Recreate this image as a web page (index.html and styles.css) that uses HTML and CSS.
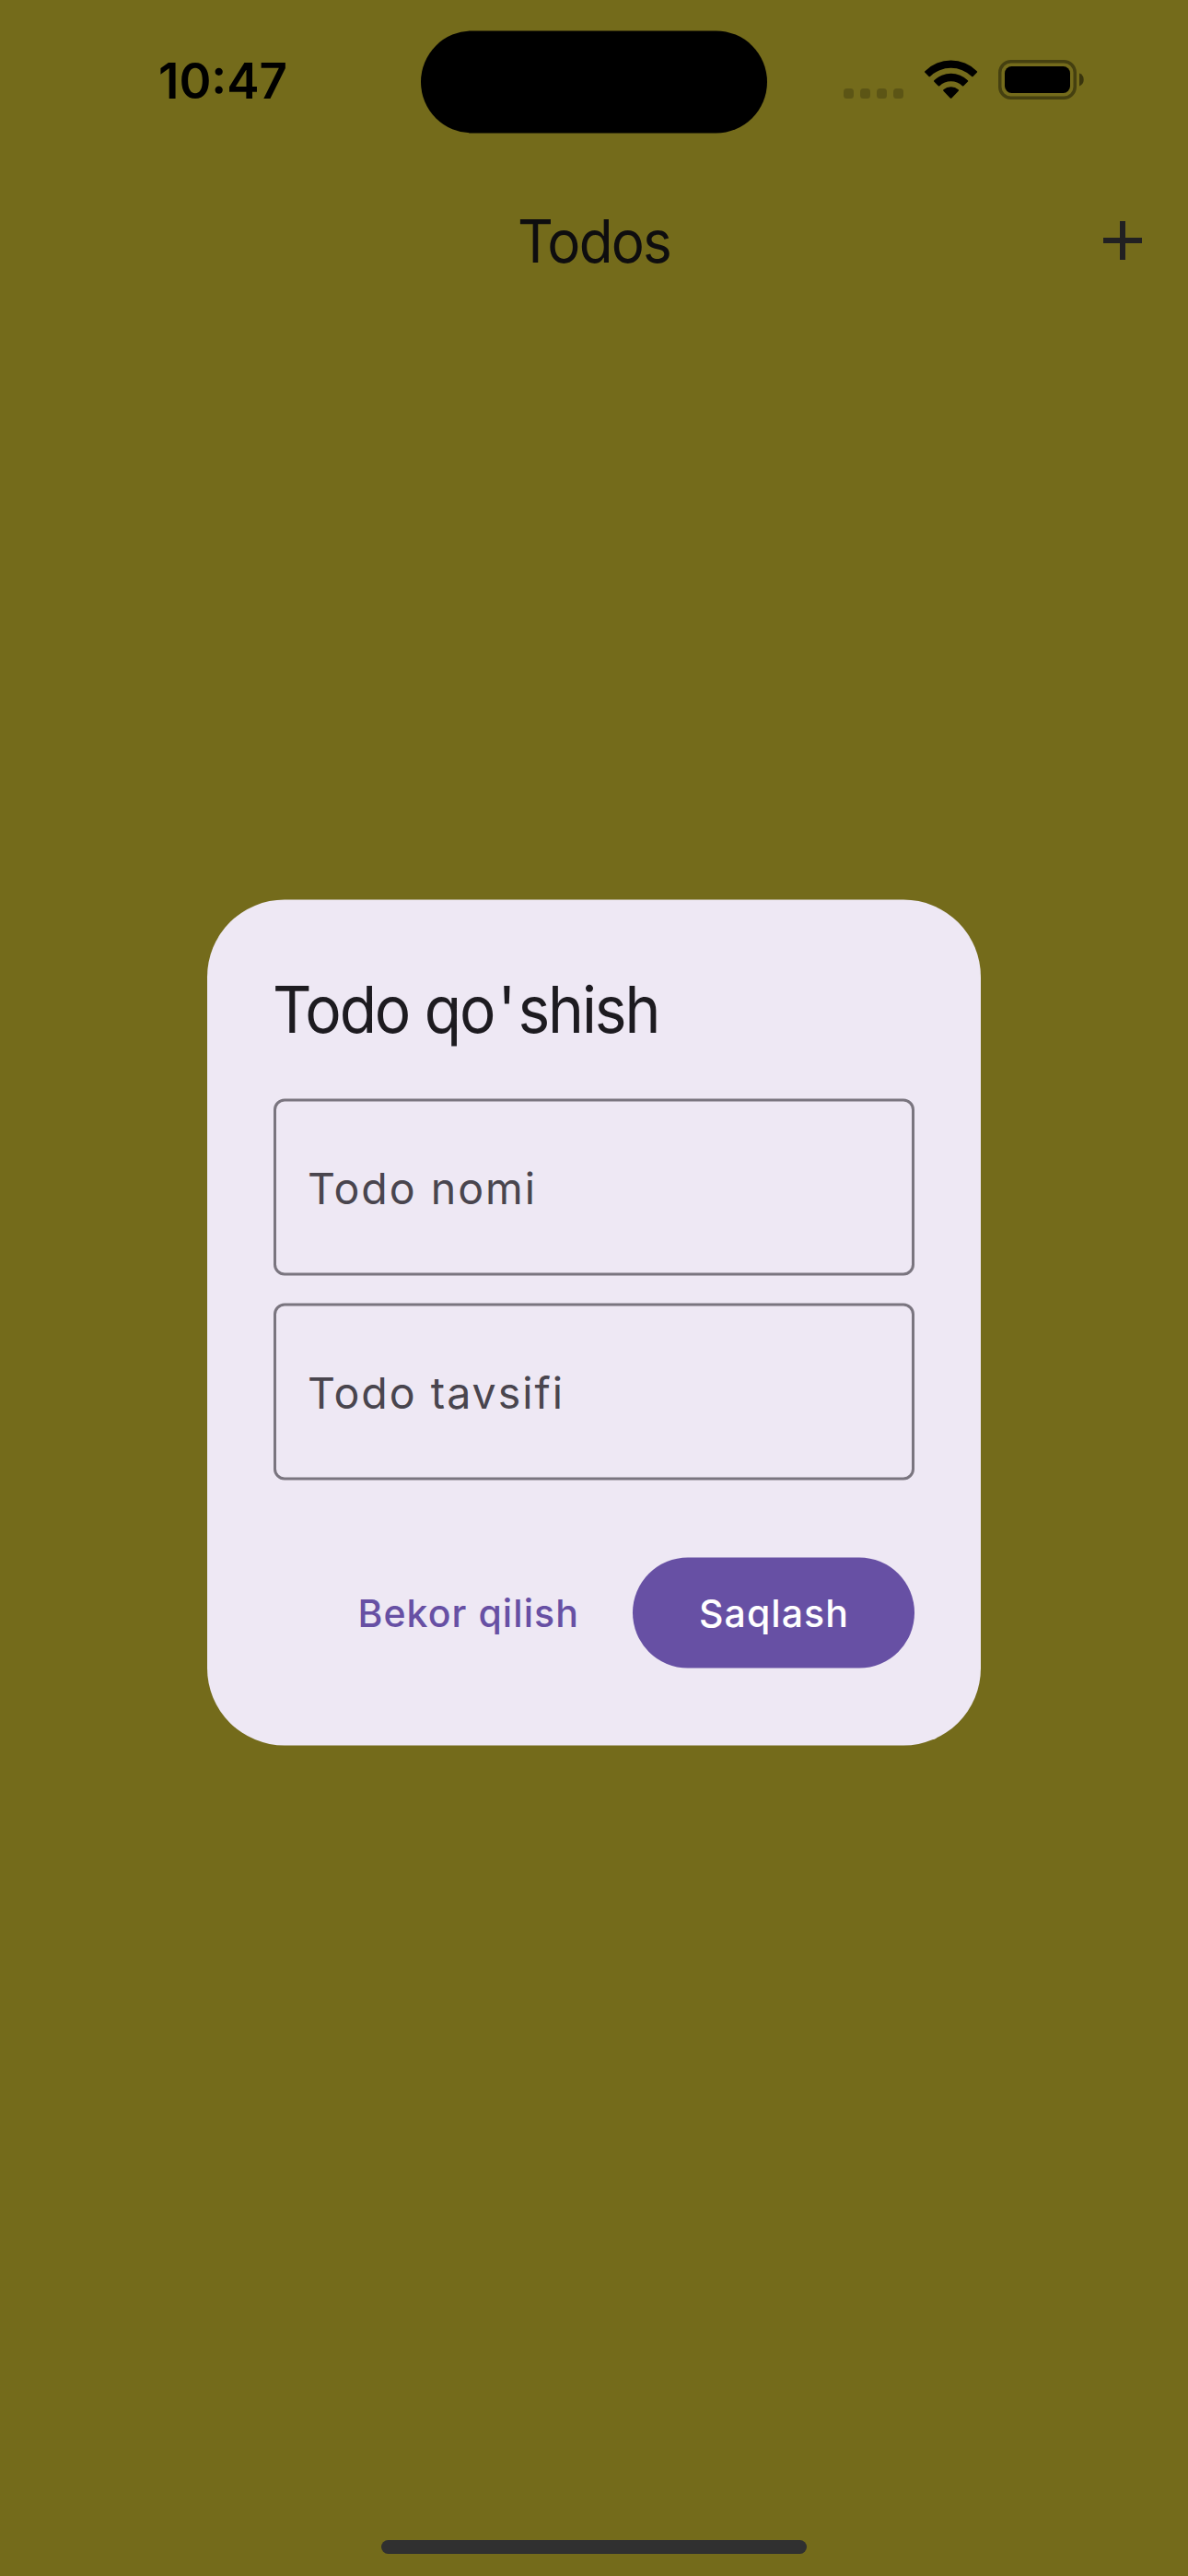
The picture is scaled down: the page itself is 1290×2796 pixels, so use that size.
FILE: index.html
```html
<!DOCTYPE html>
<html lang="uz">
<head>
<meta charset="utf-8">
<title>Todos</title>
<link rel="stylesheet" href="styles.css">
</head>
<body>
<div class="screen">
  <header class="status-bar">
    <div class="clock">10:47</div>
    <div class="island"></div>
    <div class="indicators">
      <div class="cellular"><i></i><i></i><i></i><i></i></div>
      <svg class="wifi" viewBox="0 0 58 43" aria-hidden="true">
        <path d="M0.2 13.6Q-0.3 12.9 0.4 12.2A40 40 0 0 1 56.8 12.2Q57.5 12.9 57 13.6L52.6 18Q51.9 18.6 51.2 18A32.5 32.5 0 0 0 6 18Q5.3 18.6 4.6 18Z"/>
        <path d="M10.2 23.6Q9.6 22.9 10.3 22.2A26.3 26.3 0 0 1 46.9 22.2Q47.6 22.9 47 23.6L42.3 28.3Q41.6 28.9 40.9 28.3A17.8 17.8 0 0 0 16.3 28.3Q15.6 28.9 14.9 28.3Z"/>
        <path d="M20.4 33.7Q19.7 33 20.5 32.3A12.4 12.4 0 0 1 36.7 32.3Q37.5 33 36.8 33.7L29.4 41.4Q28.6 42.2 27.8 41.4Z"/>
      </svg>
      <svg class="battery" viewBox="0 0 95 43" aria-hidden="true">
        <rect x="1.75" y="1.75" width="81.5" height="39.5" rx="12" fill="none" stroke="#000" stroke-opacity=".4" stroke-width="3.5"/>
        <rect x="7" y="7" width="71" height="29" rx="7.5"/>
        <path d="M88 14.6A7.4 7.4 0 0 1 88 28.4Z" fill-opacity=".5"/>
      </svg>
    </div>
  </header>

  <nav class="app-bar">
    <h1 class="app-title">Todos</h1>
    <svg class="add" viewBox="0 0 24 24" aria-hidden="true"><path d="M19 13h-6v6h-2v-6H5v-2h6V5h2v6h6z"/></svg>
  </nav>

  <main class="content">
    <section class="dialog">
      <h2 class="dialog-title">Todo qo<span class="apostrophe">'</span>shish</h2>
      <div class="field"><label>Todo nomi</label></div>
      <div class="field"><label>Todo tavsifi</label></div>
      <div class="actions">
        <button class="btn text">Bekor qilish</button>
        <button class="btn filled">Saqlash</button>
      </div>
    </section>
  </main>

  <footer class="home"><div class="home-bar"></div></footer>
</div>
</body>
</html>
```
FILE: styles.css
```css
* { box-sizing: border-box; }

body {
  margin: 0;
  background: #746b1b;
  font-family: Inter, "Liberation Sans", sans-serif;
}

.screen {
  display: flex;
  flex-direction: column;
  width: 1290px;
  height: 2796px;
}

/* Status bar */
.status-bar {
  display: grid;
  grid-template-columns: 457px 376px 1fr;
  height: 177px;
}

.clock {
  padding: 58px 0 0 172px;
  font-size: 53px;
  font-weight: 600;
  line-height: 60px;
}

.island {
  height: 111px;
  margin-top: 33px;
  border-radius: 56px;
  background: #000;
  transform: translateY(.4px);
}

.indicators {
  display: flex;
  align-items: flex-start;
  padding: 65px 0 0 83px;
}

.cellular {
  display: flex;
  gap: 7px;
  margin: 31px 23px 0 0;
}

.cellular i {
  width: 11px;
  height: 11px;
  border-radius: 3.5px;
  background: rgba(0, 0, 0, .2);
}

.wifi {
  width: 58px;
  height: 43px;
  margin-right: 22px;
}

.battery {
  width: 95px;
  height: 43px;
}

/* App bar */
.app-bar {
  display: grid;
  grid-template-columns: 107px 1fr 107px;
  align-items: center;
  height: 168px;
}

.app-title {
  grid-column: 2;
  margin: 1px 0 0;
  color: #0e0d0f;
  font-size: 64px;
  font-weight: 400;
  letter-spacing: -1.9px;
  line-height: 84px;
  text-align: center;
  transform: scaleX(.94);
}

.add {
  width: 72px;
  height: 72px;
  fill: #212022;
}

/* Dialog */
.content {
  flex: 1;
  padding-top: 632px;
}

.dialog {
  width: 840px;
  height: 918px;
  margin: 0 auto;
  padding: 72px;
  border-radius: 84px;
  background: #eee8f4;
  transform: translateY(-.5px);
}

.dialog-title {
  width: max-content;
  margin: 0 0 51px -1.5px;
  color: #1d1b20;
  font-size: 70px;
  font-weight: 400;
  letter-spacing: -2.2px;
  line-height: 93px;
  transform: scaleX(.94);
  transform-origin: left;
}

.apostrophe {
  margin: 0 4.5px;
}

.field {
  display: flex;
  align-items: center;
  height: 192px;
  margin-bottom: 30px;
  padding: 2px 34px 0;
  border: 3px solid #7a757f;
  border-radius: 12px;
  color: #49454e;
  font-size: 46.5px;
  letter-spacing: 2px;
}

.actions {
  display: flex;
  justify-content: flex-end;
  gap: 22px;
  margin-top: 84px;
}

.btn {
  height: 120px;
  padding: 0 36px;
  border: 0;
  border-radius: 60px;
  background: none;
  color: #6750a4;
  font: 500 41px Inter, "Liberation Sans", sans-serif;
  letter-spacing: 1.08px;
}

.btn.filled {
  width: 306px;
  padding: 0 0 0 1px;
  background: #6750a4;
  color: #fff;
}

/* Home indicator */
.home {
  display: flex;
  justify-content: center;
  height: 39px;
}

.home-bar {
  width: 462px;
  height: 15px;
  border-radius: 8px;
  background: #303030;
}
```
